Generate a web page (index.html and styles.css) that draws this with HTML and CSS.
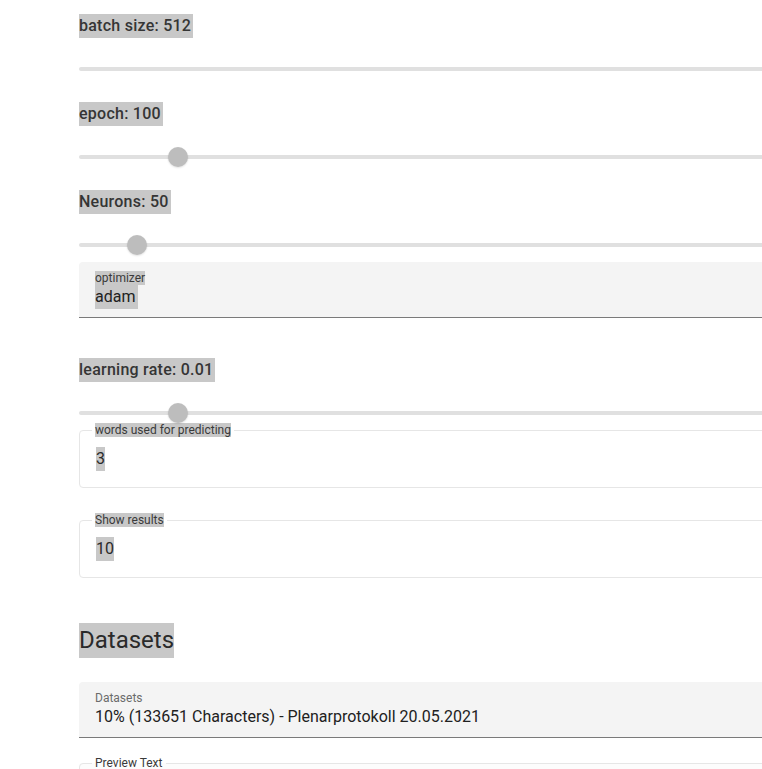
FILE: index.html
```html
<!DOCTYPE html>
<html>
<head>
<meta charset="utf-8">
<link rel="stylesheet" href="styles.css">
</head>
<body>
<main class="page">
  <section class="param">
    <div class="param-label"><span class="sel">batch size: 512</span></div>
    <div class="slider"><div class="track"></div></div>
  </section>
  <section class="param">
    <div class="param-label"><span class="sel">epoch: 100</span></div>
    <div class="slider"><div class="track"></div><div class="thumb" style="left:99px"></div></div>
  </section>
  <section class="param param-tight">
    <div class="param-label"><span class="sel">Neurons: 50</span></div>
    <div class="slider"><div class="track"></div><div class="thumb" style="left:58px"></div></div>
  </section>

  <div class="filled">
    <div class="filled-label"><span class="sel">optimizer</span></div>
    <div class="filled-value"><span class="sel">adam</span></div>
  </div>

  <section class="param param-after-box">
    <div class="param-label"><span class="sel">learning rate: 0.01</span></div>
    <div class="slider slider-short"><div class="track"></div><div class="thumb" style="left:99px"></div></div>
  </section>

  <fieldset class="outlined first">
    <legend><span class="sel">words used for predicting</span></legend>
    <div class="outlined-value"><span class="sel">3</span></div>
  </fieldset>

  <fieldset class="outlined second">
    <legend><span class="sel">Show results</span></legend>
    <div class="outlined-value"><span class="sel">10</span></div>
  </fieldset>

  <h2 class="section-title"><span class="sel">Datasets</span></h2>

  <div class="filled">
    <div class="filled-label muted">Datasets</div>
    <div class="filled-value">10% (133651 Characters) - Plenarprotokoll 20.05.2021</div>
  </div>

  <fieldset class="outlined preview">
    <legend class="muted">Preview Text</legend>
    <div class="outlined-value preview-body"></div>
  </fieldset>
</main>
</body>
</html>
```

FILE: styles.css
```css
html, body {
  margin: 0;
  padding: 0;
  background: #ffffff;
  overflow: hidden;
}

body {
  font-family: Roboto, "Liberation Sans", Arial, sans-serif;
  color: #2f2f2f;
  width: 762px;
  height: 769px;
}

.page {
  width: 840px;
  margin-left: 79px;
  padding-top: 14px;
  display: flex;
  flex-direction: column;
}

.sel {
  background: #c8c8c8;
  display: inline-block;
}

.param {
  display: flex;
  flex-direction: column;
  margin-bottom: 16px;
}

.param-tight {
  margin-bottom: 0;
}

.param-after-box {
  margin-top: 40px;
  margin-bottom: 0;
}

.param-label {
  font-size: 16px;
  font-weight: 500;
  line-height: 24px;
  height: 24px;
  color: #353535;
  letter-spacing: 0.25px;
}

.param-label .sel {
  line-height: 24px;
  padding-right: 2px;
}

.slider {
  position: relative;
  padding: 29px 0 15px;
}

.slider-short {
  padding-bottom: 8px;
}

.track {
  height: 4px;
  border-radius: 2px;
  background: #e0e0e0;
}

.thumb {
  position: absolute;
  top: 21px;
  width: 20px;
  height: 20px;
  margin-left: -10px;
  border-radius: 50%;
  background: #bdbdbd;
  box-shadow: 0 1px 2px rgba(0, 0, 0, 0.12);
}

.filled {
  background: #f4f4f4;
  border-radius: 4px 4px 0 0;
  border-bottom: 1px solid #7a7a7a;
  padding: 9px 16px 8px;
}

.filled-label {
  font-size: 12px;
  line-height: 14px;
  height: 14px;
  color: #3a3a3a;
}

.filled-value {
  font-size: 16px;
  line-height: 24px;
  height: 24px;
  color: #212121;
}

.filled-value .sel {
  padding-right: 3px;
}

.muted {
  color: #6b6b6b;
}

.outlined {
  margin: 0;
  border: 1px solid #e6e6e6;
  border-radius: 4px;
  padding: 10px 15px 16px;
  min-width: 0;
}

.outlined.first {
  margin-top: 0;
}

.outlined.second {
  margin-top: 25px;
}

.outlined legend {
  font-size: 12px;
  line-height: 14px;
  padding: 0 3px;
  margin-left: -3px;
  color: #3a3a3a;
}

.outlined-value {
  font-size: 16px;
  line-height: 24px;
  height: 24px;
  color: #2a2a2a;
  padding-left: 1px;
}

.section-title {
  margin: 45px 0 24px;
  font-size: 24px;
  font-weight: 400;
  line-height: 35px;
  height: 35px;
  color: #2a2a2a;
}

.outlined.preview {
  margin-top: 18px;
  background: #fcfcfc;
}

.preview-body {
  height: 120px;
}
```
